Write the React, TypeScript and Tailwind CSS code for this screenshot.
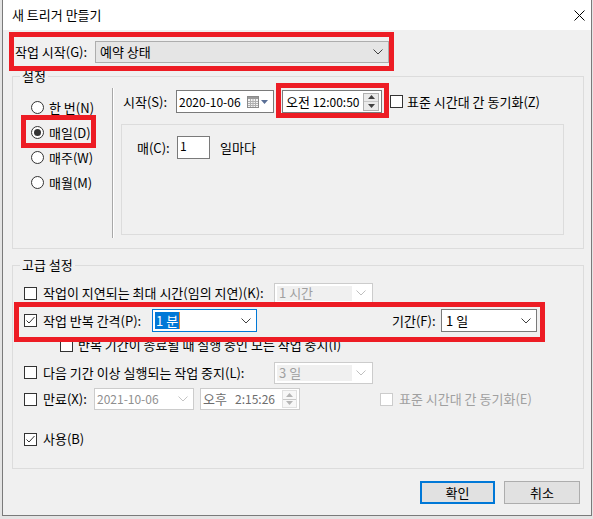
import React from "react";

const Chevron = ({ color = "#404040" }: { color?: string }) => (
  <svg width="10" height="6" viewBox="0 0 10 6" className="flex-none">
    <path d="M0.5 0.5 L5 5 L9.5 0.5" fill="none" stroke={color} strokeWidth="1" />
  </svg>
);

const Checkbox = ({ checked = false, disabled = false }: { checked?: boolean; disabled?: boolean }) => (
  <span
    className={
      disabled
        ? "flex-none w-[13px] h-[13px] border border-[#cccccc] bg-white flex items-center justify-center"
        : "flex-none w-[13px] h-[13px] border border-[#333333] bg-white flex items-center justify-center"
    }
  >
    {checked && (
      <svg width="11" height="11" viewBox="0 0 11 11">
        <path d="M1.5 5.5 L4 8 L9.5 2" fill="none" stroke="#333333" strokeWidth="1" />
      </svg>
    )}
  </span>
);

const Radio = ({ checked = false }: { checked?: boolean }) => (
  <span className="flex-none w-[13px] h-[13px] rounded-full border border-[#333333] bg-white flex items-center justify-center">
    {checked && <span className="w-[7px] h-[7px] rounded-full bg-[#333333]" />}
  </span>
);

const Spin = ({ disabled = false }: { disabled?: boolean }) => {
  const c = disabled ? "#b5b5b5" : "#404040";
  return (
    <div
      className={
        disabled
          ? "flex-none w-[15px] h-[18px] flex flex-col border border-[#e0e0e0] bg-[#f7f7f7]"
          : "flex-none w-[16px] h-[18px] flex flex-col border border-[#b0b0b0] bg-[#eaeaea]"
      }
    >
      <div className="flex-1 flex items-center justify-center border-b border-[#c8c8c8]">
        <svg width="7" height="4" viewBox="0 0 7 4">
          <path d="M0 4 L3.5 0 L7 4 Z" fill={c} />
        </svg>
      </div>
      <div className="flex-1 flex items-center justify-center">
        <svg width="7" height="4" viewBox="0 0 7 4">
          <path d="M0 0 L3.5 4 L7 0 Z" fill={c} />
        </svg>
      </div>
    </div>
  );
};

const CalendarIcon = () => (
  <svg width="22" height="12" viewBox="0 0 22 12" className="flex-none">
    <rect x="0.5" y="0.5" width="11" height="11" fill="#f4f4f4" stroke="#8a8a8a" />
    <rect x="1" y="1" width="10" height="2" fill="#9a9a9a" />
    <path d="M1 5.5 H11 M1 7.5 H11 M1 9.5 H11 M3.5 3 V11 M6 3 V11 M8.5 3 V11" stroke="#b0b0b0" strokeWidth="1" />
    <path d="M14 4 L21 4 L17.5 8 Z" fill="#5a6f96" />
  </svg>
);

export default function App() {
  return (
    <div className="relative w-[593px] h-[519px] bg-[#e4e4e4] overflow-hidden font-['Noto_Sans_CJK_KR',sans-serif] text-[13px] leading-[16px] text-black">
      <div className="ml-[2px] w-[590px] h-[516px] bg-[#f0f0f0] border-x border-b border-[#7a7a7a] flex flex-col">
        {/* Title bar */}
        <div className="h-[30px] flex-none bg-white flex items-center justify-between pl-[9px] pr-[6px]">
          <span>새 트리거 만들기</span>
          <svg width="11" height="11" viewBox="0 0 11 11">
            <path d="M0.5 0.5 L10.5 10.5 M10.5 0.5 L0.5 10.5" stroke="#000" strokeWidth="1" />
          </svg>
        </div>

        {/* 작업 시작 */}
        <div className="mt-[11px] h-[22px] flex items-center pl-[12px]">
          <span className="w-[80px] flex-none">작업 시작(G):</span>
          <div className="w-[294px] h-[22px] border border-[#adadad] bg-[#e5e5e5] flex items-center justify-between pl-[4px] pr-[5px]">
            <span>예약 상태</span>
            <Chevron />
          </div>
        </div>

        {/* 설정 */}
        <fieldset className="ml-[9px] mt-[5px] w-[572px] border border-[#dcdcdc] pb-[10px]">
          <legend className="ml-[7px] px-[2px] leading-[16px]">설정</legend>
          <div className="flex">
            <div className="w-[99px] flex-none pl-[18px] pt-[11px] flex flex-col">
              <div className="h-[25px] flex items-center gap-[5px]">
                <Radio />
                <span>한 번(N)</span>
              </div>
              <div className="h-[25px] flex items-center gap-[5px]">
                <Radio checked />
                <span>매일(D)</span>
              </div>
              <div className="h-[25px] flex items-center gap-[5px]">
                <Radio />
                <span>매주(W)</span>
              </div>
              <div className="h-[25px] flex items-center gap-[5px]">
                <Radio />
                <span>매월(M)</span>
              </div>
            </div>
            <div className="w-[2px] flex-none mt-[4px] border-l border-[#a8a8a8] border-r border-r-white" />
            <div className="pl-[7px] pt-[6px] pb-[3px] flex flex-col">
              <div className="h-[23px] flex items-center pl-[2px]">
                <span className="w-[53px] flex-none">시작(S):</span>
                <div className="w-[98px] h-[23px] border border-[#7a7a7a] bg-white flex items-center justify-between pl-[2px] pr-[4px]">
                  <span className="text-[12px]">2020-10-06</span>
                  <CalendarIcon />
                </div>
                <div className="ml-[8px] w-[100px] h-[23px] border border-[#7a7a7a] bg-white flex items-center justify-between pl-[3px] pr-[2px]">
                  <span>
                    오전 <span className="text-[12px]">12:00:50</span>
                  </span>
                  <Spin />
                </div>
                <div className="ml-[8px] flex items-center gap-[4px]">
                  <Checkbox />
                  <span>표준 시간대 간 동기화(Z)</span>
                </div>
              </div>
              <div className="mt-[11px] w-[443px] h-[111px] border border-[#dcdcdc] pl-[15px] pt-[11px]">
                <div className="flex items-center h-[23px]">
                  <span className="w-[40px] flex-none">매(C):</span>
                  <div className="w-[33px] h-[23px] border border-[#7a7a7a] bg-white pl-[2px] pt-[1px] text-[12px]">1</div>
                  <span className="ml-[10px]">일마다</span>
                </div>
              </div>
            </div>
          </div>
        </fieldset>

        {/* 고급 설정 */}
        <fieldset className="ml-[9px] mt-[8px] w-[572px] border border-[#dcdcdc] pl-[11px] pb-[18px]">
          <legend className="ml-[-4px] px-[2px] leading-[16px]">고급 설정</legend>
          <div className="flex flex-col">
            <div className="mt-[9px] h-[22px] flex items-center">
              <Checkbox />
              <span className="ml-[6px] w-[231px] flex-none">작업이 지연되는 최대 시간(임의 지연)(K):</span>
              <div className="w-[99px] h-[21px] border border-[#cccccc] bg-white p-[2px] flex items-center">
                <div className="flex-1 h-full bg-[#f0f0f0] pl-[2px] flex items-center text-[#a0a0a0]">1 시간</div>
                <div className="w-[18px] flex justify-center">
                  <Chevron color="#bfbfbf" />
                </div>
              </div>
            </div>
            <div className="mt-[5px] h-[23px] flex items-center">
              <Checkbox checked />
              <span className="ml-[6px] w-[109px] flex-none">작업 반복 간격(P):</span>
              <div className="w-[105px] h-[23px] border border-[#0078d7] bg-white flex items-center justify-between pl-[2px] pr-[5px]">
                <div className="flex items-center">
                  <span className="bg-[#0078d7] text-white px-[1px] leading-[17px]">1 분</span>
                  <span className="w-[1px] h-[17px] bg-[#e8892f]" />
                </div>
                <Chevron />
              </div>
              <span className="ml-[135px] w-[49px] flex-none">기간(F):</span>
              <div className="w-[96px] h-[23px] border border-[#7a7a7a] bg-white flex items-center justify-between pl-[4px] pr-[5px]">
                <span>1 일</span>
                <Chevron />
              </div>
            </div>
            <div className="mt-[2px] h-[22px] flex items-center pl-[36px]">
              <Checkbox />
              <span className="ml-[5px]">반복 기간이 종료될 때 실행 중인 모든 작업 중지(I)</span>
            </div>
            <div className="mt-[5px] h-[23px] flex items-center">
              <Checkbox />
              <span className="ml-[6px] w-[231px] flex-none">다음 기간 이상 실행되는 작업 중지(L):</span>
              <div className="w-[99px] h-[22px] border border-[#cccccc] bg-white p-[2px] flex items-center">
                <div className="flex-1 h-full bg-[#f0f0f0] pl-[2px] flex items-center text-[#a0a0a0]">3 일</div>
                <div className="w-[18px] flex justify-center">
                  <Chevron color="#bfbfbf" />
                </div>
              </div>
            </div>
            <div className="mt-[4px] h-[22px] flex items-center">
              <Checkbox />
              <span className="ml-[6px] w-[51px] flex-none">만료(X):</span>
              <div className="w-[100px] h-[22px] border border-[#cccccc] bg-white flex items-center justify-between pl-[2px] pr-[5px] text-[#8f8f8f]">
                <span className="text-[12px]">2021-10-06</span>
                <Chevron color="#c4c4c4" />
              </div>
              <div className="ml-[6px] w-[100px] h-[22px] border border-[#cccccc] bg-white flex items-center justify-between pl-[2px] pr-[2px] text-[#6d6d6d]">
                <span className="whitespace-pre">
                  오후<span className="text-[12px]">   2:15:26</span>
                </span>
                <Spin disabled />
              </div>
              <div className="ml-[80px] flex items-center gap-[6px]">
                <Checkbox disabled />
                <span className="text-[#a0a0a0]">표준 시간대 간 동기화(E)</span>
              </div>
            </div>
            <div className="mt-[18px] h-[22px] flex items-center">
              <Checkbox checked />
              <span className="ml-[6px]">사용(B)</span>
            </div>
          </div>
        </fieldset>

        {/* Buttons */}
        <div className="mt-[12px] flex justify-end gap-[9px] pr-[11px]">
          <button className="w-[75px] h-[23px] border-2 border-[#0078d7] bg-[#e1e1e1] flex items-center justify-center">
            확인
          </button>
          <button className="w-[76px] h-[23px] border border-[#adadad] bg-[#e1e1e1] flex items-center justify-center">
            취소
          </button>
        </div>
      </div>

      {/* Red annotation boxes */}
      <div className="absolute left-[9px] top-[32px] w-[385px] h-[39px] border-[5px] border-[#ed1c24]" />
      <div className="absolute left-[21px] top-[115px] w-[75px] h-[33px] border-[5px] border-[#ed1c24]" />
      <div className="absolute left-[276px] top-[83px] w-[113px] h-[35px] border-[5px] border-[#ed1c24]" />
      <div className="absolute left-[14px] top-[302px] w-[531px] h-[40px] border-[5px] border-[#ed1c24]" />
    </div>
  );
}
